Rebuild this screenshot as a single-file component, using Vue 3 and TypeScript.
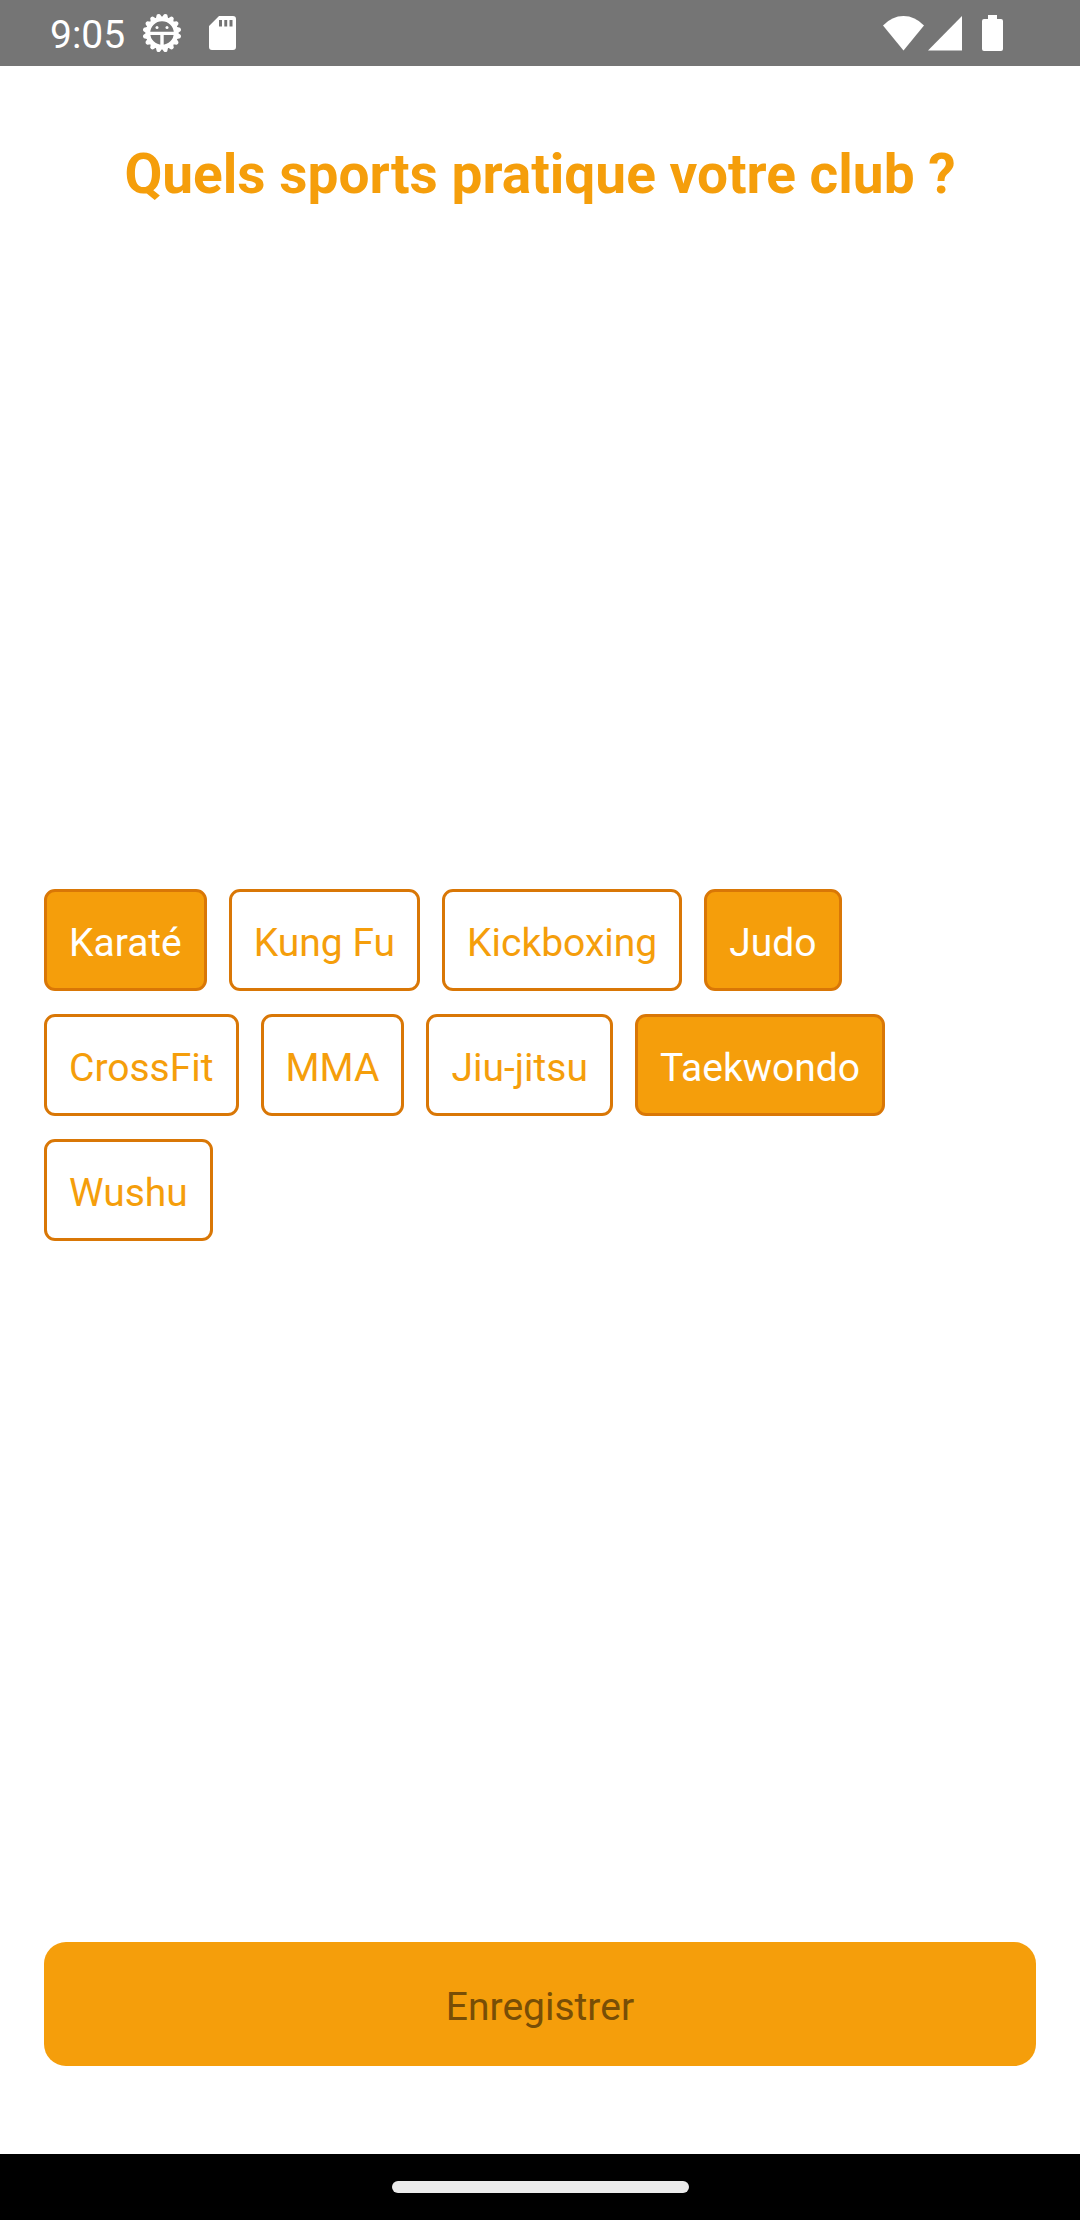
<script setup lang="ts">
import { ref } from 'vue'

interface Sport {
  name: string
  selected: boolean
}

const sports = ref<Sport[]>([
  { name: 'Karaté', selected: true },
  { name: 'Kung Fu', selected: false },
  { name: 'Kickboxing', selected: false },
  { name: 'Judo', selected: true },
  { name: 'CrossFit', selected: false },
  { name: 'MMA', selected: false },
  { name: 'Jiu-jitsu', selected: false },
  { name: 'Taekwondo', selected: true },
  { name: 'Wushu', selected: false },
])

// Angles of the teeth around the gear
const toothCount = 16
const teeth = Array.from({ length: toothCount }, (_, i) => (i + 0.5) * (360 / toothCount))
</script>

<template>
  <div class="screen">
    <header class="status">
      <time class="clock">9:05</time>
      <svg class="gear" width="40" height="40" viewBox="-20 -20 40 40" aria-hidden="true">
        <circle r="14" fill="none" stroke="#fff" stroke-width="4.4" />
        <path
          v-for="angle in teeth"
          :key="angle"
          d="M-3.400 -15 L-1.600 -18.800 Q0 -20 1.600 -18.800 L3.400 -15Z"
          fill="#fff"
          :transform="`rotate(${angle})`"
        />
        <path d="M-13 0.4H13M0 0V14" stroke="#fff" stroke-width="3.4" fill="none" />
        <circle cx="-5" cy="-5.5" r="1.5" fill="#fff" />
        <circle cx="5" cy="-5.5" r="1.5" fill="#fff" />
      </svg>
      <svg class="card" width="27" height="34" viewBox="0 0 27 34" aria-hidden="true">
        <path
          fill="#fff"
          fill-rule="evenodd"
          d="M10 0H24Q27 0 27 3V31Q27 34 24 34H3Q0 34 0 31V10ZM10 4V10.500H13V4ZM15.300 4V10.500H18.200V4ZM20.500 4V10.500H23.500V4Z"
        />
      </svg>
      <span class="spacer"></span>
      <svg width="41" height="35" viewBox="0 0 41 35" aria-hidden="true">
        <path fill="#fff" d="M0 9.500Q9 0 20.500 0T41 9.500L20.500 34.500Z" />
      </svg>
      <svg class="signal" width="34" height="35" viewBox="0 0 34 35" aria-hidden="true">
        <path fill="#fff" d="M34 0V34.500H0Z" />
      </svg>
      <svg class="battery" width="21" height="36" viewBox="0 0 21 36" aria-hidden="true">
        <path
          fill="#fff"
          d="M6 0H15V4H19Q21 4 21 6V34Q21 36 19 36H2Q0 36 0 34V6Q0 4 2 4H6Z"
        />
      </svg>
    </header>

    <main class="content">
      <h1 class="title">Quels sports pratique votre club ?</h1>
      <div class="area">
        <div class="chips" role="group" aria-label="Sports">
          <button
            v-for="sport in sports"
            :key="sport.name"
            type="button"
            class="chip"
            :class="{ selected: sport.selected }"
            :aria-pressed="sport.selected"
            @click="sport.selected = !sport.selected"
          >
            {{ sport.name }}
          </button>
        </div>
      </div>
      <button type="button" class="save">Enregistrer</button>
    </main>

    <footer class="nav"><span class="handle"></span></footer>
  </div>
</template>

<style>
body {
  margin: 0;
  background: #fff;
}
</style>

<style scoped>
.screen {
  display: flex;
  flex-direction: column;
  min-height: 100vh;
  font-family: Roboto, 'Liberation Sans', sans-serif;
  background: #fff;
}

.status {
  display: flex;
  align-items: center;
  box-sizing: border-box;
  height: 66px;
  padding: 0 77px 0 50px;
  background: #757575;
  color: #fff;
}

.clock {
  padding-top: 3px;
  font-size: 39px;
  line-height: 46px;
}

.gear {
  margin-left: 17px;
}

.card {
  margin-left: 27px;
}

.spacer {
  flex: 1;
}

.signal {
  margin-left: 4px;
}

.battery {
  margin-left: 20px;
}

.content {
  flex: 1;
  display: flex;
  flex-direction: column;
  padding: 72px 44px 88px;
}

.title {
  margin: 0;
  font-size: 55px;
  font-weight: 700;
  line-height: 72px;
  text-align: center;
  color: #f59e0b;
}

.area {
  flex: 1;
  display: flex;
  align-items: center;
  padding-bottom: 22px;
}

.chips {
  display: flex;
  flex-wrap: wrap;
  gap: 23px 22px;
}

.chip {
  padding: 28px 22px 22px;
  border: 3px solid #d97706;
  border-radius: 11px;
  background: #fff;
  color: #f59e0b;
  font-family: inherit;
  font-size: 39px;
  line-height: 46px;
}

.chip.selected {
  background: #f59e0b;
  color: #fff;
}

.save {
  padding: 42px 22px 36px;
  border: 0;
  border-radius: 22px;
  background: #f59e0b;
  color: #784e06;
  font-family: inherit;
  font-size: 39px;
  line-height: 46px;
}

.nav {
  display: flex;
  align-items: center;
  justify-content: center;
  height: 66px;
  background: #000;
}

.handle {
  width: 297px;
  height: 12px;
  border-radius: 6px;
  background: #ebebeb;
}
</style>
